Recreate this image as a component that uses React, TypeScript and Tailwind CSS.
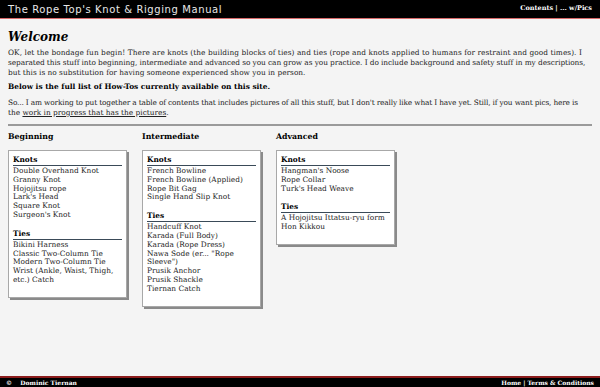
const serif = "font-['DejaVu_Serif',Georgia,serif]";

interface Section {
	title: string;
	items: string[];
}

interface Column {
	heading: string;
	sections: Section[];
}

const COLUMNS: Column[] = [
	{
		heading: "Beginning",
		sections: [
			{
				title: "Knots",
				items: [
					"Double Overhand Knot",
					"Granny Knot",
					"Hojojitsu rope",
					"Lark's Head",
					"Square Knot",
					"Surgeon's Knot",
				],
			},
			{
				title: "Ties",
				items: [
					"Bikini Harness",
					"Classic Two-Column Tie",
					"Modern Two-Column Tie",
					"Wrist (Ankle, Waist, Thigh, etc.) Catch",
				],
			},
		],
	},
	{
		heading: "Intermediate",
		sections: [
			{
				title: "Knots",
				items: [
					"French Bowline",
					"French Bowline (Applied)",
					"Rope Bit Gag",
					"Single Hand Slip Knot",
				],
			},
			{
				title: "Ties",
				items: [
					"Handcuff Knot",
					"Karada (Full Body)",
					"Karada (Rope Dress)",
					'Nawa Sode (er... "Rope Sleeve")',
					"Prusik Anchor",
					"Prusik Shackle",
					"Tiernan Catch",
				],
			},
		],
	},
	{
		heading: "Advanced",
		sections: [
			{
				title: "Knots",
				items: ["Hangman's Noose", "Rope Collar", "Turk's Head Weave"],
			},
			{
				title: "Ties",
				items: ["A Hojojitsu Ittatsu-ryu form", "Hon Kikkou"],
			},
		],
	},
];

function ListBox({ sections }: { sections: Section[] }) {
	return (
		<div className="bg-white border border-[#a8a8a8] shadow-[2px_2px_0_#8a8a8a] px-[4px] pt-[4px] pb-[12px] flex flex-col gap-[9px]">
			{sections.map((s) => (
				<div key={s.title}>
					<div className="font-bold text-[7.4px] leading-[9px] border-b border-[#3a4a58] pb-[1px] mb-[1px] text-black">
						{s.title}
					</div>
					<ul className="text-[7.4px] leading-[8.8px] text-[#222]">
						{s.items.map((item) => (
							<li key={item} className="pr-[4px]">
								{item}
							</li>
						))}
					</ul>
				</div>
			))}
		</div>
	);
}

export default function App() {
	return (
		<div className={`min-h-[387px] flex flex-col bg-[#f4f4f4] ${serif} text-[#222]`}>
			<header className="h-[19px] bg-black border-b border-[#d86a6a] flex items-center justify-between px-[8px]">
				<span className="font-['DejaVu_Sans',sans-serif] text-[10px] tracking-[0.6px] text-[#e8e8e8]">
					The Rope Top's Knot &amp; Rigging Manual
				</span>
				<span className="text-[6.5px] font-bold text-white">
					Contents | ... w/Pics
				</span>
			</header>

			<main className="px-[8px] pt-[11px]">
				<h1 className="text-[12px] font-bold italic leading-[14px] text-black mb-[4px]">
					Welcome
				</h1>
				{/* lines broken where the original wraps */}
				<p className="text-[7.4px] leading-[10px] mb-[4px] whitespace-nowrap">
					<span className="block tracking-[0.05px]">
						OK, let the bondage fun begin! There are knots (the building blocks of ties) and
						ties (rope and knots applied to humans for restraint and good times). I
					</span>
					<span className="block tracking-[-0.08px]">
						separated this stuff into beginning, intermediate and advanced so you can grow
						as you practice. I do include background and safety stuff in my descriptions,
					</span>
					<span className="block">
						but this is no substitution for having someone experienced show you in person.
					</span>
				</p>
				<p className="text-[7.4px] leading-[10px] font-bold text-black mb-[6px]">
					Below is the full list of How-Tos currently available on this site.
				</p>
				<p className="text-[7.4px] leading-[10px] mb-[6px] whitespace-nowrap">
					<span className="block tracking-[-0.16px]">
						So... I am working to put together a table of contents that includes pictures of
						all this stuff, but I don't really like what I have yet. Still, if you want
						pics, here is
					</span>
					<span className="block">
						the <span className="underline">work in progress that has the pictures</span>.
					</span>
				</p>
				<hr className="border-0 h-[2px] bg-[#9a9a9a] w-[584px]" />

				<div className="flex gap-[15px] mt-[6px]">
					{COLUMNS.map((c) => (
						<div key={c.heading} className="w-[119px]">
							<h2 className="text-[7.8px] font-bold leading-[10px] text-black mb-[8px]">
								{c.heading}
							</h2>
							<ListBox sections={c.sections} />
						</div>
					))}
				</div>
			</main>

			<footer className="mt-auto border-t-2 border-[#8c1c1c] bg-black h-[11px] flex items-center justify-between px-[6px] text-[6px] font-bold text-white">
				<span>©&nbsp;&nbsp;&nbsp;&nbsp;Dominic Tiernan</span>
				<span>Home | Terms &amp; Conditions</span>
			</footer>
		</div>
	);
}
